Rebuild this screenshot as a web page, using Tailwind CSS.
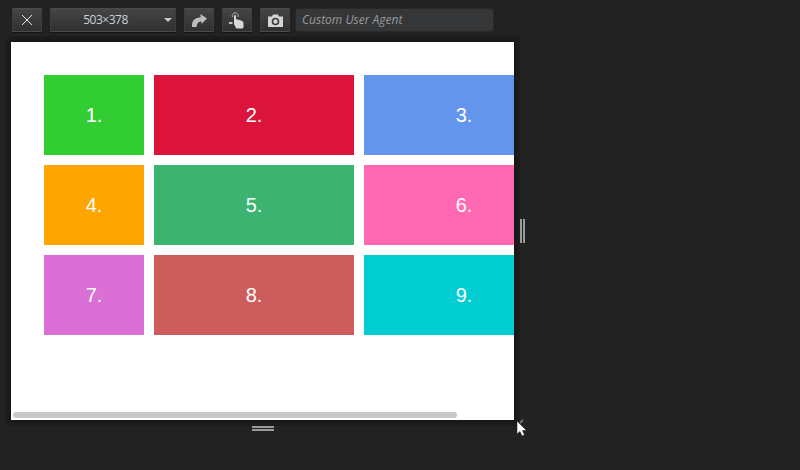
<!DOCTYPE html>
<html>
<head>
<meta charset="utf-8">
<script src="https://cdn.jsdelivr.net/npm/@tailwindcss/browser@4"></script>
</head>
<body class="w-[800px] h-[470px] overflow-hidden bg-[#222222] font-['Liberation_Sans',Arial,sans-serif]">
<div class="relative w-[800px] h-[470px]">
  <!-- toolbar -->
  <div class="flex items-start h-[36px] pt-[8px] pl-[12px]">
    <button class="w-[30px] h-[24px] mr-[8px] flex items-center justify-center border border-[#3d3d3d] border-t-[#4b4b4b] border-b-[#4a4a4a] bg-gradient-to-b from-[#454545] to-[#303030] shadow-[0_1px_0_#141414]">
      <svg width="12" height="12" viewBox="0 0 12 12"><path d="M1 1 L11 11 M11 1 L1 11" stroke="#e4e4e4" stroke-width="1" fill="none"/></svg>
    </button>
    <button class="relative w-[126px] h-[24px] mr-[8px] flex items-center justify-center pr-[15px] border border-[#3d3d3d] border-t-[#4b4b4b] border-b-[#4a4a4a] bg-gradient-to-b from-[#454545] to-[#303030] shadow-[0_1px_0_#141414] font-['Open_Sans',sans-serif] text-[12px] tracking-[-0.5px] text-[#c6d3df]">503×378
      <span class="absolute right-[3px] top-[9px] w-0 h-0 border-x-[4px] border-x-transparent border-t-[4px] border-t-[#c8c8c8]"></span>
    </button>
    <button class="w-[30px] h-[24px] mr-[8px] flex items-center justify-center border border-[#3d3d3d] border-t-[#4b4b4b] border-b-[#4a4a4a] bg-gradient-to-b from-[#454545] to-[#303030] shadow-[0_1px_0_#141414]">
      <svg width="15" height="13" viewBox="0 0 15 13"><path d="M0 13 C-0.500 6.500 3 3.500 8.500 3.500 L8.500 0 L15 4.500 L9.500 10 L9.500 7.500 C6.500 7.500 5 9 4.500 13 Z" fill="#bdbdbd"/></svg>
    </button>
    <button class="w-[30px] h-[24px] mr-[8px] flex items-center justify-center border border-[#3d3d3d] border-t-[#4b4b4b] border-b-[#4a4a4a] bg-gradient-to-b from-[#454545] to-[#303030] shadow-[0_1px_0_#141414]">
      <svg width="16" height="18" viewBox="0 0 16 18"><path d="M3.500 6 A3 3 0 1 1 9 6" stroke="#b0b0b0" stroke-width="1" fill="none"/><path d="M5 5 a1 1 0 0 1 2 0 V8 L12 9.500 C14 10 14.500 11 14.500 13 V16 C14.500 17 13.500 17.500 12.500 17.500 H8.500 C7.500 17.500 7 17 6.500 16 L5 13 Z" fill="#d8d8d8"/><rect x="0" y="11" width="3.500" height="2" fill="#c4c4c4"/></svg>
    </button>
    <button class="w-[30px] h-[24px] mr-[5px] flex items-center justify-center border border-[#3d3d3d] border-t-[#4b4b4b] border-b-[#4a4a4a] bg-gradient-to-b from-[#454545] to-[#303030] shadow-[0_1px_0_#141414]">
      <svg width="15" height="13" viewBox="0 0 15 13"><path d="M0 2.500 H4 L5 0.500 H10 L11 2.500 H15 V13 H0 Z" fill="#d4d4d4"/><circle cx="7.500" cy="7.500" r="3" fill="#d4d4d4" stroke="#3a3a3a" stroke-width="1.600"/></svg>
    </button>
    <div class="w-[199px] h-[24px] rounded-[3px] border border-[#282828] bg-[#343638] flex items-center pl-[6px] font-['Open_Sans',sans-serif] italic text-[12px] text-[#9a9a9a]">Custom User Agent</div>
  </div>

  <!-- device frame -->
  <div class="flex items-center ml-[5px] w-[600px]">
    <div class="w-[515px] h-[390px] pt-[6px] pl-[6px] rounded-l-[8px] bg-[#1d1d1d]">
      <div class="relative w-[503px] h-[378px] bg-white overflow-hidden shadow-[0_0_4px_#0f0f0f]">
        <div class="grid grid-cols-[100px_200px_200px] grid-rows-[80px_80px_80px] gap-[10px] pt-[33px] pl-[33px] w-[600px] text-white text-[20px]">
          <div class="flex items-center justify-center bg-[#32cd32]">1.</div>
          <div class="flex items-center justify-center bg-[#dc143c]">2.</div>
          <div class="flex items-center justify-center bg-[#6495ed]">3.</div>
          <div class="flex items-center justify-center bg-[#ffa500]">4.</div>
          <div class="flex items-center justify-center bg-[#3cb371]">5.</div>
          <div class="flex items-center justify-center bg-[#ff69b4]">6.</div>
          <div class="flex items-center justify-center bg-[#da70d6]">7.</div>
          <div class="flex items-center justify-center bg-[#cd5c5c]">8.</div>
          <div class="flex items-center justify-center bg-[#00ced1]">9.</div>
        </div>
        <div class="absolute left-[2px] bottom-[2px] w-[444px] h-[6px] rounded-[3px] bg-[#c8c8c8]"></div>
      </div>
    </div>
    <!-- right resize handle -->
    <div class="flex gap-[1px] h-[24px]">
      <span class="w-[2px] h-full bg-[#9a9a9a]"></span>
      <span class="w-[2px] h-full bg-[#9a9a9a]"></span>
    </div>
  </div>
  <!-- bottom resize handle -->
  <div class="ml-[252px] w-[22px] h-[5px] border-y-2 border-y-[#9a9a9a]"></div>

  <!-- cursor -->
  <svg class="absolute left-[515px] top-[418px]" width="16" height="22" viewBox="0 0 16 22">
    <path d="M8 2 L5 5" stroke="#777" stroke-width="2" fill="none"/>
    <path d="M2 3 L2 16 L5 13.500 L7 18 L9.500 17 L7.500 12.500 L11.500 12.500 Z" fill="#ffffff" stroke="#111" stroke-width="0.500"/>
  </svg>
</div>
</body>
</html>
